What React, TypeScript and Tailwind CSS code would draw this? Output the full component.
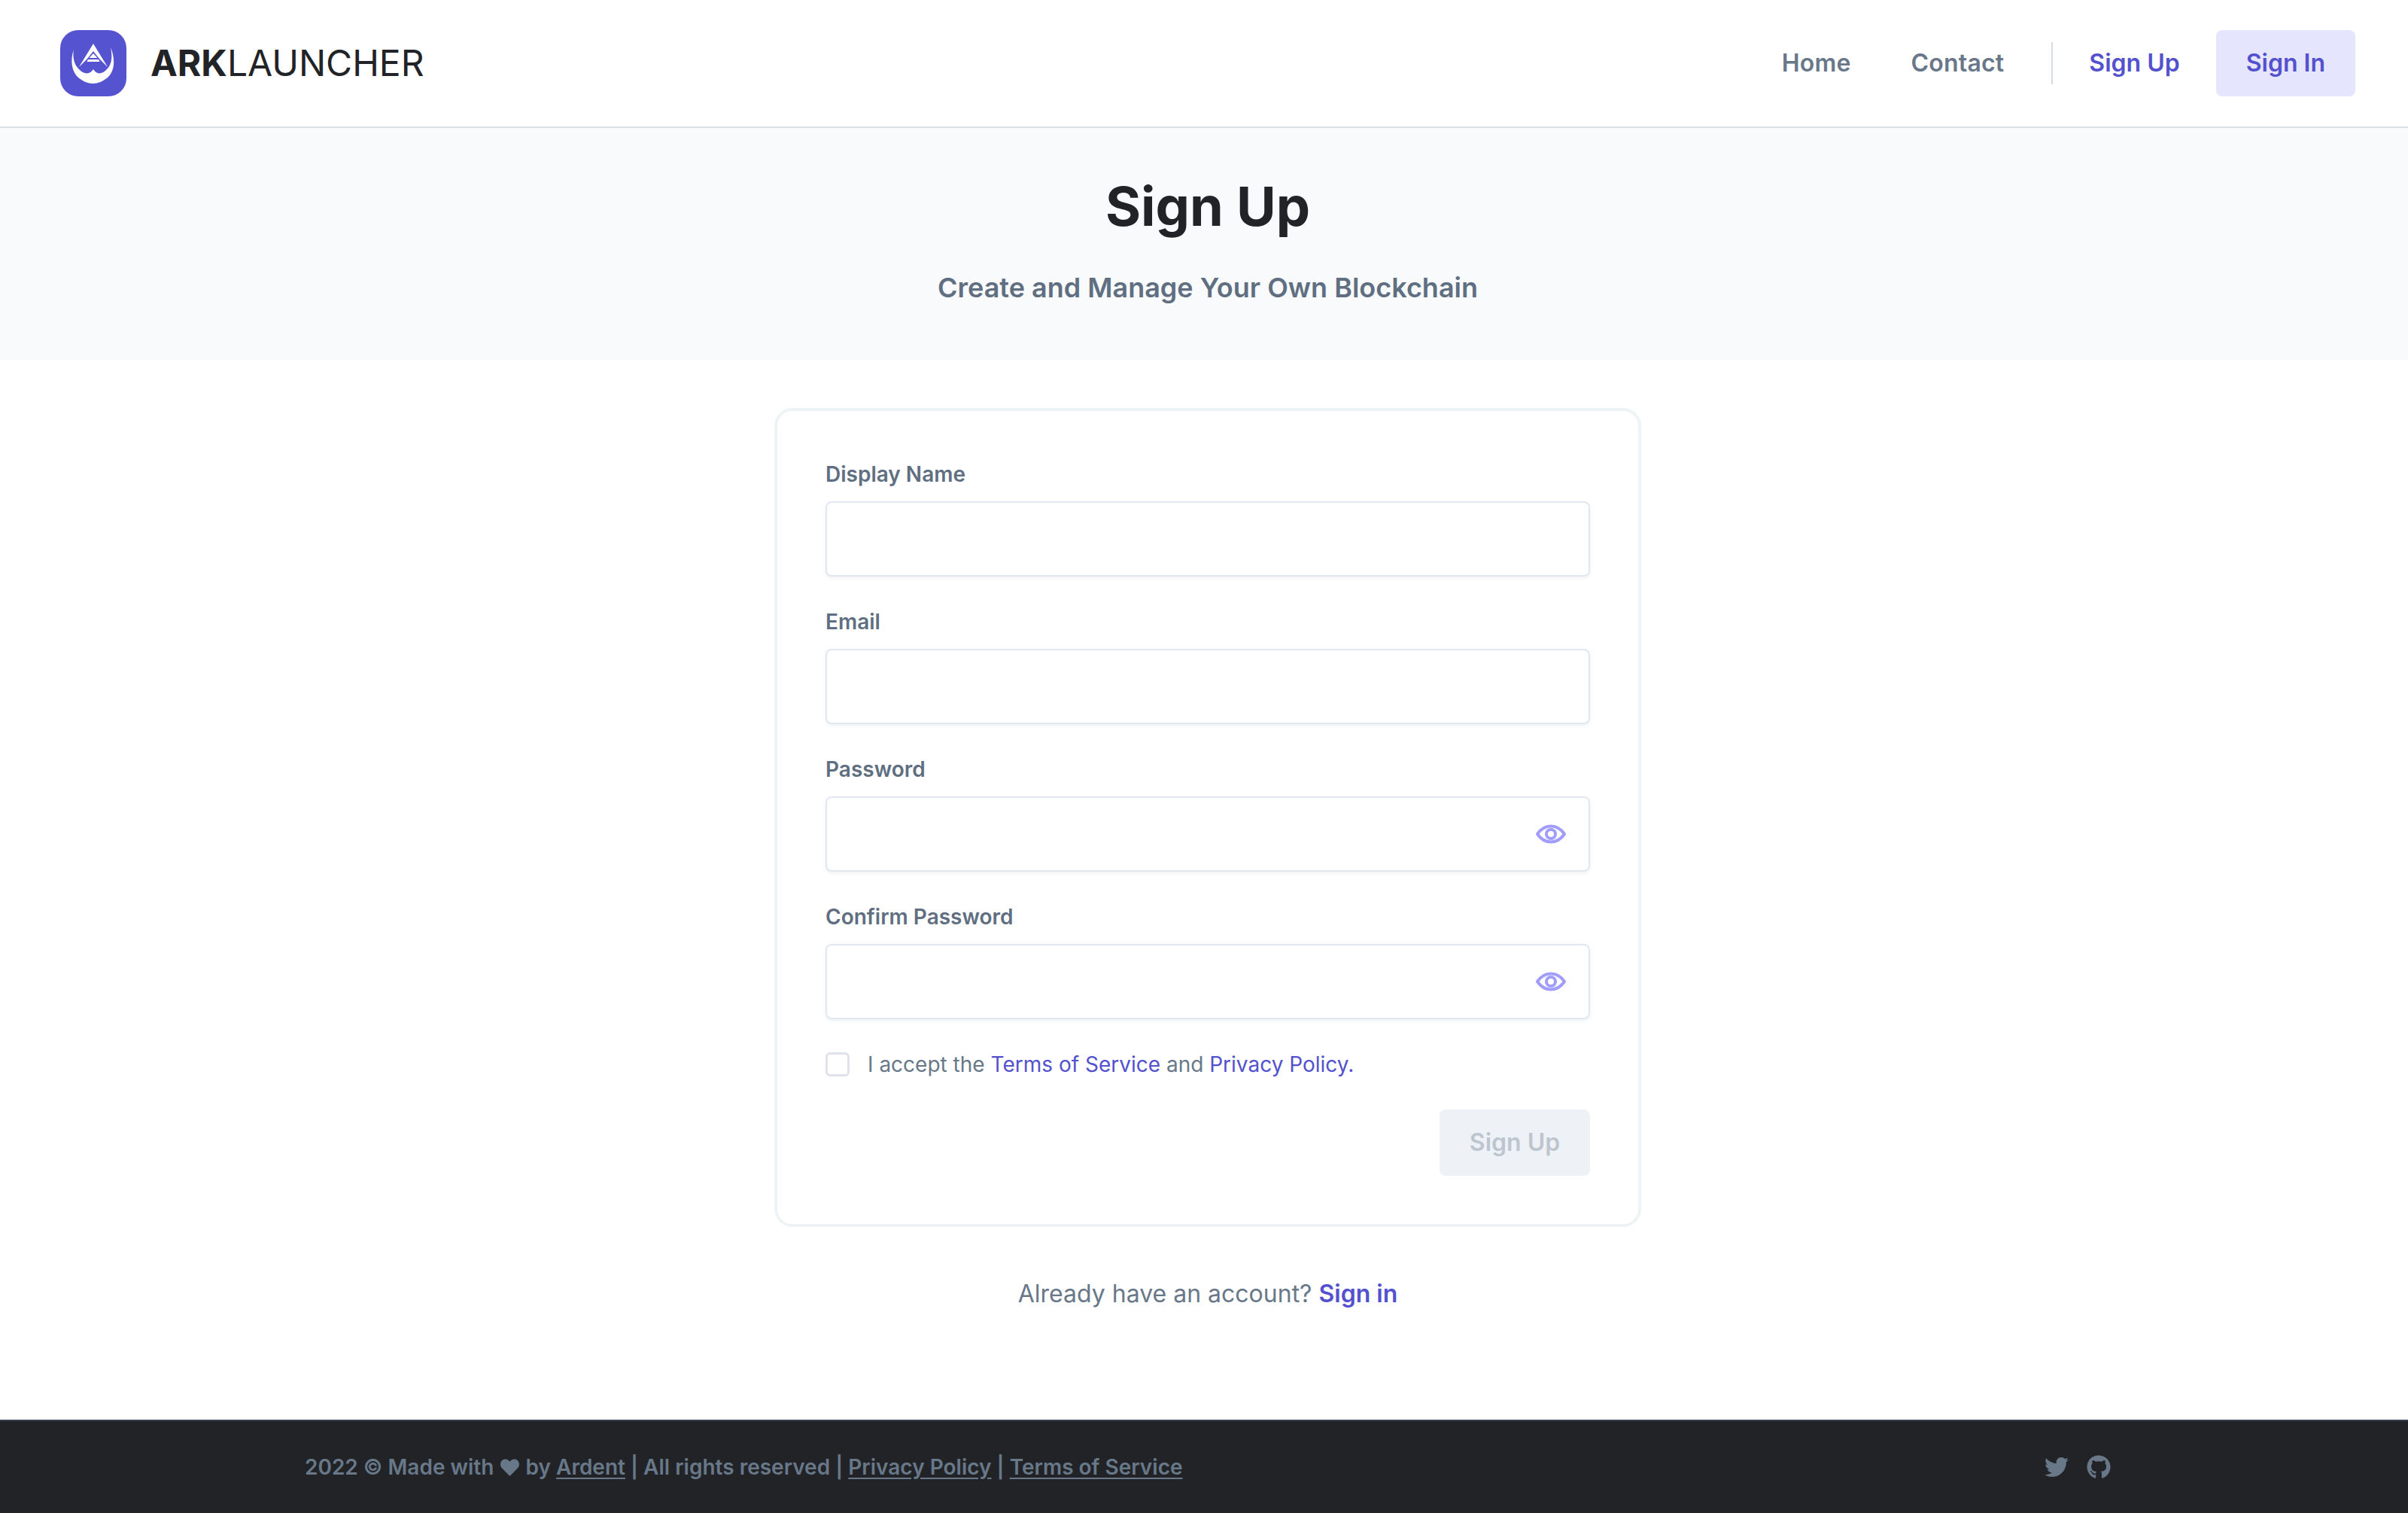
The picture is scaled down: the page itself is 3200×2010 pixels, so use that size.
import React from "react";
import { FaGithub, FaHeart, FaTwitter } from "react-icons/fa";

function Logo() {
  return (
    <div className="w-[88px] h-[88px] rounded-[24px] bg-[#5553cf] flex items-center justify-center">
      <svg width="88" height="88" viewBox="0 0 88 88">
        <path fill="#fff" d="M18 26 C13 40 15 55 24 63 C30 68 37 71 43.500 71 C50 71 57 68 63 63 C72 55 74 40 67 23 C70 37 68 47 61 53 C55 59 48 59 44 52 C40 59 32 59 26 53 C19 47 16 37 18 26 Z" />
        <path fill="#fff" d="M44 18 L63 49 L52 38 L44 28 L36 38 L25 49 Z" />
        <path fill="#fff" d="M44 31 L49.500 37 L38.500 37 Z" />
        <path fill="#fff" d="M37 39 H51 L52.500 42 H35.500 Z" />
      </svg>
    </div>
  );
}

function EyeIcon() {
  return (
    <svg width="42" height="26" viewBox="0 0 42 26" fill="none" stroke="#a09dfd" strokeWidth="4">
      <path d="M3 13 C7.500 6.500 14 2.500 21 2.500 C28 2.500 34.500 6.500 39 13 C34.500 19.500 28 23.500 21 23.500 C14 23.500 7.500 19.500 3 13 Z" strokeLinejoin="round" />
      <circle cx="21" cy="13" r="6" />
    </svg>
  );
}

function Field({ label, eye }: { label: string; eye?: boolean }) {
  return (
    <div className="flex flex-col">
      <label className="text-[28px] leading-[40px] font-semibold text-[#5f6f81] mb-[16px]">{label}</label>
      <div className="h-[100px] rounded-[8px] border-2 border-[#e2e8f0] bg-white shadow-[0_2px_4px_rgba(226,232,240,0.6)] flex items-center justify-end pr-[29px]">
        {eye && <EyeIcon />}
      </div>
    </div>
  );
}

export default function App() {
  return (
    <div className="min-h-screen flex flex-col bg-white font-['Inter',sans-serif]">
      <header className="h-[170px] shrink-0 border-b-2 border-[#dbe0e7] flex items-center justify-between pl-[80px] pr-[70px]">
        <div className="flex items-center gap-[32px]">
          <Logo />
          <div className="text-[48px] leading-none text-[#212327]">
            <span className="font-bold">ARK</span>
            <span className="font-normal">LAUNCHER</span>
          </div>
        </div>
        <nav className="flex items-center text-[32px]">
          <a className="font-semibold text-[#687889] tracking-[0.2px]">Home</a>
          <a className="font-semibold text-[#687889] tracking-[0.2px] ml-[80px]">Contact</a>
          <div className="w-[2px] h-[56px] bg-[#d7dce4] ml-[63px] mr-[48px]" />
          <a className="font-semibold text-[#5351cd]">Sign Up</a>
          <a className="ml-[48px] h-[88px] px-[40px] rounded-[8px] bg-[#e5e5fd] font-semibold text-[#5351cd] flex items-center">Sign In</a>
        </nav>
      </header>

      <section className="h-[308px] shrink-0 bg-[#f8fafc] flex flex-col items-center pt-[56px] pl-[10px]">
        <h1 className="text-[72px] leading-[96px] font-bold text-[#212327]">Sign Up</h1>
        <p className="mt-[34px] text-[36px] leading-[52px] font-semibold text-[#5f6f81]">Create and Manage Your Own Blockchain</p>
      </section>

      <main className="flex-1 flex flex-col items-center pt-[64px] pl-[10px]">
        <div className="w-[1152px] rounded-[24px] border-4 border-[#eef3f6] p-[64px]">
          <div className="flex flex-col gap-[40px]">
            <Field label="Display Name" />
            <Field label="Email" />
            <Field label="Password" eye />
            <Field label="Confirm Password" eye />
          </div>
          <div className="mt-[44px] flex items-center h-[32px]">
            <div className="w-[32px] h-[32px] rounded-[6px] border-[3px] border-[#dfe2ea] bg-white" />
            <p className="ml-[24px] text-[28px] leading-[40px] text-[#687889]">
              I accept the <a className="text-[#5351cd]">Terms of Service</a> and <a className="text-[#5351cd]">Privacy Policy.</a>
            </p>
          </div>
          <div className="mt-[44px] flex justify-end">
            <button className="w-[200px] h-[88px] rounded-[8px] bg-[#eef2f6] text-[32px] font-semibold text-[#bdc5ce]">Sign Up</button>
          </div>
        </div>
        <p className="mt-[66px] text-[32px] leading-[46px] text-[#687889]">
          Already have an account? <a className="font-semibold text-[#5351cd]">Sign in</a>
        </p>
      </main>

      <footer className="h-[124px] shrink-0 bg-[#212327] border-t-2 border-[#35404a] pl-[10px]">
        <div className="w-[2400px] h-full mx-auto flex items-center justify-between text-[#687889] text-[28px] font-semibold">
          <p className="leading-[40px] flex items-center whitespace-pre">
            2022 © Made with <FaHeart className="w-[25px] h-[25px] inline mx-[1.500px]" /> by <a className="underline underline-offset-4">Ardent</a> | All rights reserved | <a className="underline underline-offset-4">Privacy Policy</a> | <a className="underline underline-offset-4">Terms of Service</a>
          </p>
          <div className="flex items-center gap-[24px]">
            <FaTwitter className="w-[32px] h-[32px]" />
            <FaGithub className="w-[32px] h-[32px]" />
          </div>
        </div>
      </footer>
    </div>
  );
}
